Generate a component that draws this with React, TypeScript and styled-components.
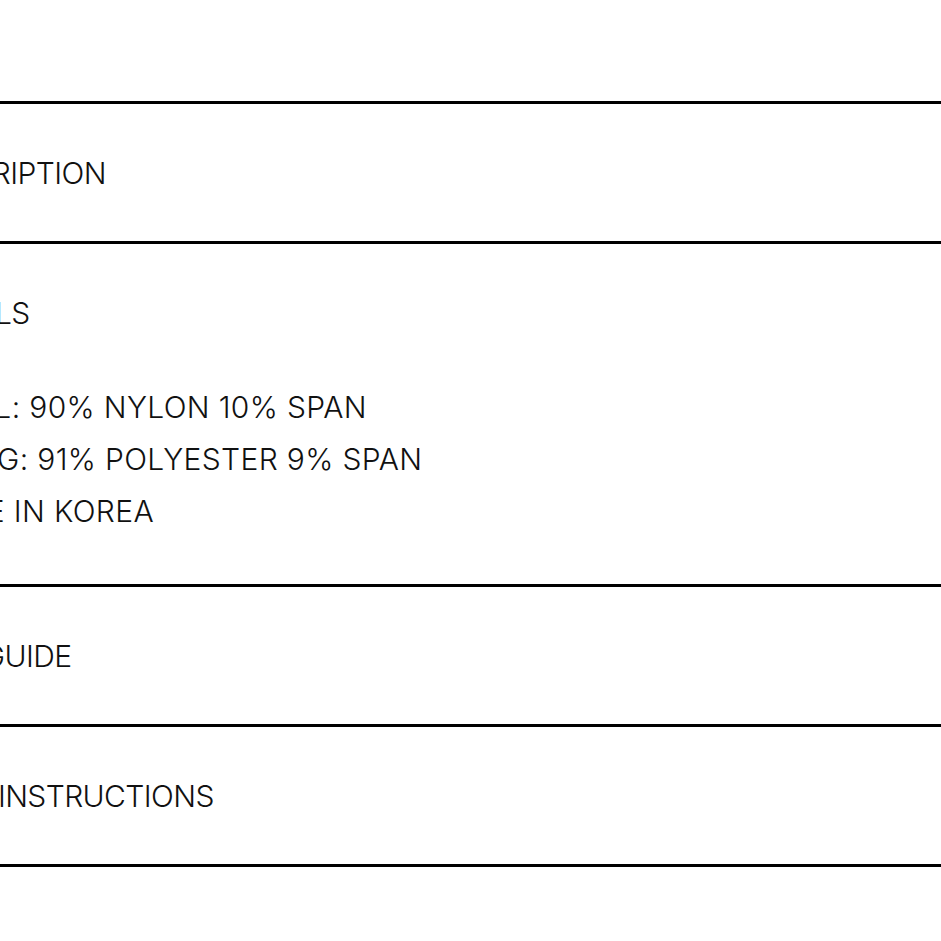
import React from "react";
import styled, { createGlobalStyle } from "styled-components";

const Global = createGlobalStyle`
  html, body { margin: 0; padding: 0; background: #fff; overflow: hidden; }
  body { font-family: Inter, "Noto Sans", sans-serif; color: #111; }
`;

const Page = styled.div`
  width: 941px;
  height: 941px;
  overflow: hidden;
  padding-top: 101px;
  box-sizing: border-box;
`;

const List = styled.div`
  margin-left: -86px;
  border-bottom: 3px solid #000;
`;

const Item = styled.section`
  border-top: 3px solid #000;
`;

const Header = styled.div`
  height: 137px;
  display: flex;
  align-items: center;
  font-size: 30px;
  font-weight: 300;
  letter-spacing: -0.6px;
  white-space: nowrap;
`;

const Body = styled.div`
  padding: 0 0 47px 3px;
`;

const Line = styled.div`
  font-size: 30px;
  font-weight: 300;
  letter-spacing: 0.35px;
  line-height: 52px;
  white-space: nowrap;
`;

const items = [
  { title: "DESCRIPTION" },
  {
    title: "DETAILS",
    lines: ["SHELL: 90% NYLON 10% SPAN", "LINING: 91% POLYESTER 9% SPAN", "MADE IN KOREA"],
  },
  { title: "SIZE GUIDE" },
  { title: "CARE INSTRUCTIONS" },
];

export default function App() {
  return (
    <>
      <Global />
      <Page>
        <List>
          {items.map((it) => (
            <Item key={it.title}>
              <Header>{it.title}</Header>
              {it.lines && (
                <Body>
                  {it.lines.map((l) => (
                    <Line key={l}>{l}</Line>
                  ))}
                </Body>
              )}
            </Item>
          ))}
        </List>
      </Page>
    </>
  );
}
